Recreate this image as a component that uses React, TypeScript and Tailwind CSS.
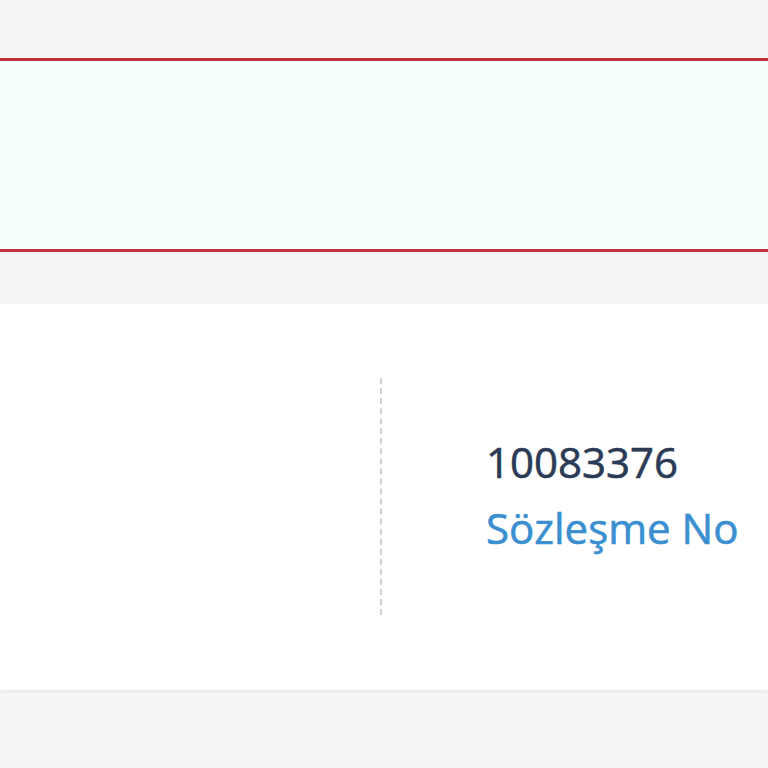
export default function App() {
  return (
    <div className="min-h-screen bg-[#f5f5f5] pt-[58px] font-['Open_Sans',sans-serif]">
      <div className="h-[194px] border-y-[3px] border-[#c0313b] bg-[#f7fffb]" />

      <div className="mt-[52px] h-[386px] bg-white shadow-[0_2px_3px_rgba(0,0,0,0.05)]">
        <div className="flex items-start pt-[74px]">
          <div className="w-[380px]" />
          <div className="h-[237px] w-0 border-l-2 border-dashed border-[#cfcfcf]" />
          <div className="pl-[104px] pt-[51px] [-webkit-text-stroke:0.6px_currentColor]">
            <div className="text-[42px] leading-[66px] text-[#2b3a55]">10083376</div>
            <div className="text-[42px] leading-[66px] text-[#3a8fd0]">Sözleşme No</div>
          </div>
        </div>
      </div>
    </div>
  );
}
